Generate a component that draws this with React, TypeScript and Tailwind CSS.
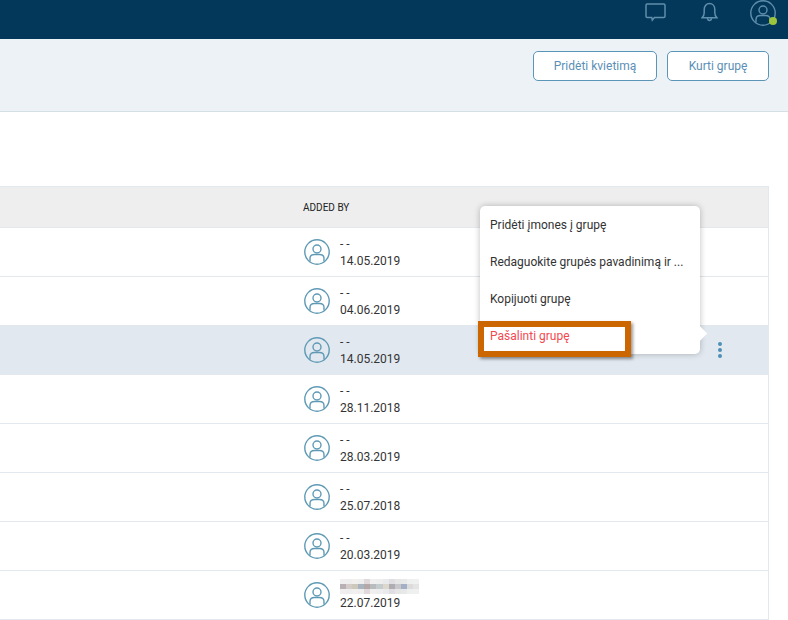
const rows = [
  { date: "14.05.2019" },
  { date: "04.06.2019" },
  { date: "14.05.2019", active: true },
  { date: "28.11.2018" },
  { date: "28.03.2019" },
  { date: "25.07.2018" },
  { date: "20.03.2019" },
  { date: "22.07.2019", blurred: true },
];

const blurLight = [
  "bg-[#f0eeee]", "bg-[#eeeeee]", "bg-[#f2f0ee]", "bg-[#eeeeee]", "bg-[#e0d8da]", "bg-[#f0f0f0]", "bg-[#eeeeee]",
  "bg-[#e8eaec]", "bg-[#e0dee2]", "bg-[#e6e6e6]", "bg-[#e6e8ea]", "bg-[#eef0f0]", "bg-[#f0f0f0]",
];
const blurDark = [
  "bg-[#b8b0b4]", "bg-[#d4ccc8]", "bg-[#ccc8bc]", "bg-[#aab4c0]", "bg-[#b4a8a8]", "bg-[#b8bcbc]", "bg-[#c4ccd0]",
  "bg-[#dcd8cc]", "bg-[#b0acb4]", "bg-[#c8c8cc]", "bg-[#a4b0c4]", "bg-[#dcdcdc]", "bg-[#e4e4e4]",
];

const UserIcon = ({ className }: { className?: string }) => (
  <svg viewBox="0 0 26 26" fill="none" stroke="currentColor" strokeWidth="1.4" className={className}>
    <circle cx="13" cy="13" r="12.2" />
    <circle cx="13" cy="10" r="4" />
    <path d="M6 22.5v-3c0-2.5 2-4 4.5-4h5c2.5 0 4.5 1.5 4.5 4v3" />
  </svg>
);

const ChatIcon = () => (
  <svg viewBox="0 0 21 19" fill="none" stroke="currentColor" strokeWidth="1.5" className="h-[19px] w-[21px]">
    <path d="M2.2 1h16.6c.7 0 1.2.5 1.2 1.2v11.1c0 .7-.5 1.2-1.2 1.2H9.5l-2.2 2.6-.5-2.6H2.2c-.7 0-1.2-.5-1.2-1.2V2.2C1 1.5 1.5 1 2.2 1z" />
  </svg>
);

const BellIcon = () => (
  <svg viewBox="0 0 17 20" fill="none" stroke="currentColor" strokeWidth="1.5" className="h-[20px] w-[17px]">
    <path d="M1 15.8c1.5-1.2 2.2-2.6 2.2-5V7.6C3.2 4.2 5.4 1.6 8.5 1.6s5.3 2.6 5.3 6v3.2c0 2.4.7 3.8 2.2 5z" />
    <path d="M6.4 16.2c.2 1.4 1 2.2 2.1 2.2s1.9-.8 2.1-2.2" />
  </svg>
);

const Blurred = () => (
  <div className="mb-[1px] -mt-[1px] grid h-[15px] w-[79px] grid-cols-13 grid-rows-3">
    {blurLight.map((c, i) => (
      <div key={`a${i}`} className={c} />
    ))}
    {blurDark.map((c, i) => (
      <div key={`b${i}`} className={c} />
    ))}
    {blurLight.map((c, i) => (
      <div key={`c${i}`} className={c} />
    ))}
  </div>
);

export default function App() {
  return (
    <div className="relative h-[620px] w-[788px] overflow-hidden bg-white font-['Roboto',sans-serif] text-xs text-[#333]">
      <header className="flex h-[39px] items-start justify-end bg-[#03385a] text-[#5f8fac]">
        <div className="mt-[3px] mr-[35px]">
          <ChatIcon />
        </div>
        <div className="mt-[2px] mr-[32px]">
          <BellIcon />
        </div>
        <div className="relative mr-[12px]">
          <UserIcon className="h-[26px] w-[26px]" />
          <span className="absolute -right-px bottom-[1px] h-2 w-2 rounded-full bg-[#9cc43c]" />
        </div>
      </header>

      <div className="flex h-[73px] justify-end gap-[10px] border-b border-[#d5e0e6] bg-[#edf2f6] pt-3 pr-[19px]">
        <button className="h-[30px] w-[124px] rounded-[5px] border border-[#5b95b8] bg-white text-[#5b8fb5]">
          Pridėti kvietimą
        </button>
        <button className="h-[30px] w-[102px] rounded-[5px] border border-[#5b95b8] bg-white text-[#5b8fb5]">
          Kurti grupę
        </button>
      </div>

      <div className="mt-[74px] mr-[19px] border-t border-r border-[#e2e8ee]">
        <div className="flex h-[41px] items-center border-b border-[#e2e8ee] bg-[#eeeeee] pt-[2px] pl-[303px] text-[10px] text-[#222]">
          ADDED BY
        </div>
        {rows.map((row, i) => (
          <div
            key={i}
            className={`flex h-[49px] items-center border-b border-[#e2e8ee] pl-[304px] ${row.active ? "bg-[#e1e8ef]" : ""}`}
          >
            <UserIcon className="h-[26px] w-[26px] text-[#5f9ab5]" />
            <div className="mt-[2px] ml-[10px] leading-[17px]">
              {row.blurred ? <Blurred /> : <div>- -</div>}
              <div>{row.date}</div>
            </div>
            {row.active && (
              <div className="mr-[46px] ml-auto flex flex-col gap-[2px]">
                <span className="h-1 w-1 rounded-full bg-[#4f8fb5]" />
                <span className="h-1 w-1 rounded-full bg-[#4f8fb5]" />
                <span className="h-1 w-1 rounded-full bg-[#4f8fb5]" />
              </div>
            )}
          </div>
        ))}
      </div>

      <div className="absolute top-[206px] left-[480px] flex h-[148px] w-[220px] flex-col rounded-[5px] bg-white pl-[10px] shadow-[0_0_6px_rgba(0,0,0,0.25)]">
        <div className="flex h-[37px] items-center">Pridėti įmones į grupę</div>
        <div className="flex h-[37px] items-center">Redaguokite grupės pavadinimą ir ...</div>
        <div className="flex h-[37px] items-center">Kopijuoti grupę</div>
        <div className="flex h-[37px] items-center text-[#f4484f]">Pašalinti grupę</div>
        <span className="absolute top-[122px] -right-[5px] h-[11px] w-[11px] rotate-45 bg-white" />
      </div>

      <div className="absolute top-[321px] left-[478px] h-[36px] w-[153px] border-[6px] border-[#cc6600] shadow-[2px_2px_3px_rgba(0,0,0,0.4)]" />
    </div>
  );
}
